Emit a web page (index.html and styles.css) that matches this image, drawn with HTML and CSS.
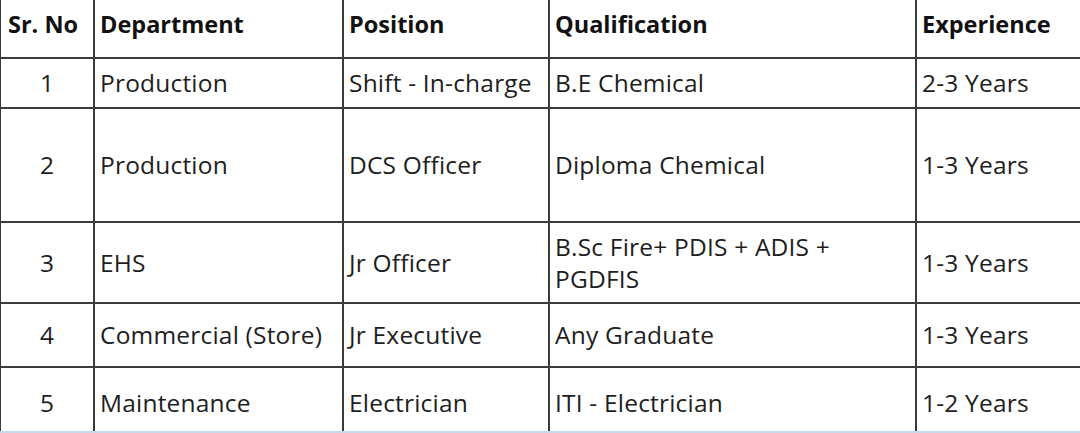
FILE: index.html
```html
<!DOCTYPE html>
<html>
<head>
<meta charset="utf-8">
<link rel="stylesheet" href="styles.css">
</head>
<body>
<div class="frame">
  <table class="jobs">
    <colgroup>
      <col class="c-sr">
      <col class="c-dept">
      <col class="c-pos">
      <col class="c-qual">
      <col class="c-exp">
    </colgroup>
    <thead>
      <tr class="r-head">
        <th class="sr-head">Sr. No</th>
        <th>Department</th>
        <th>Position</th>
        <th>Qualification</th>
        <th>Experience</th>
      </tr>
    </thead>
    <tbody>
      <tr class="r1">
        <td class="sr">1</td>
        <td>Production</td>
        <td>Shift - In-charge</td>
        <td>B.E Chemical</td>
        <td>2-3 Years</td>
      </tr>
      <tr class="r2">
        <td class="sr">2</td>
        <td>Production</td>
        <td>DCS Officer</td>
        <td>Diploma Chemical</td>
        <td>1-3 Years</td>
      </tr>
      <tr class="r3">
        <td class="sr">3</td>
        <td>EHS</td>
        <td>Jr Officer</td>
        <td class="wrap">B.Sc Fire+ PDIS + ADIS +<br>PGDFIS</td>
        <td>1-3 Years</td>
      </tr>
      <tr class="r4">
        <td class="sr">4</td>
        <td>Commercial (Store)</td>
        <td>Jr Executive</td>
        <td>Any Graduate</td>
        <td>1-3 Years</td>
      </tr>
      <tr class="r5">
        <td class="sr">5</td>
        <td>Maintenance</td>
        <td>Electrician</td>
        <td>ITI - Electrician</td>
        <td>1-2 Years</td>
      </tr>
    </tbody>
  </table>
</div>
</body>
</html>
```
FILE: styles.css
```css
html, body {
  margin: 0;
  padding: 0;
  background: #ffffff;
}

.frame {
  width: 1080px;
  height: 431px;
  overflow: hidden;
  border-bottom: 2px solid #c8d9ec;
  background: #ffffff;
}

.jobs {
  table-layout: fixed;
  border-collapse: collapse;
  width: 1200px;
  margin-top: -14px;
  margin-left: -1px;
  font-family: "Open Sans", "Noto Sans", sans-serif;
  font-size: 24.5px;
  letter-spacing: 0.2px;
  color: #1e1e1e;
}

.c-sr { width: 94px; }
.c-dept { width: 249px; }
.c-pos { width: 206px; }
.c-qual { width: 367px; }
.c-exp { width: 284px; }

.jobs th,
.jobs td {
  border: 2px solid #3b3b3b;
  padding: 0 5px;
  text-align: left;
  vertical-align: middle;
  white-space: nowrap;
  line-height: 32px;
}

.jobs th {
  font-weight: 700;
  font-size: 23.5px;
  letter-spacing: 0;
  color: #111111;
  padding-top: 3px;
}

.jobs .sr-head {
  padding-left: 7px;
}

.jobs .sr {
  text-align: center;
}

.r-head { height: 71px; }
.r1 { height: 50px; }
.r2 { height: 114px; }
.r3 { height: 81px; }
.r4 { height: 64px; }
.r5 { height: 72px; }
```
